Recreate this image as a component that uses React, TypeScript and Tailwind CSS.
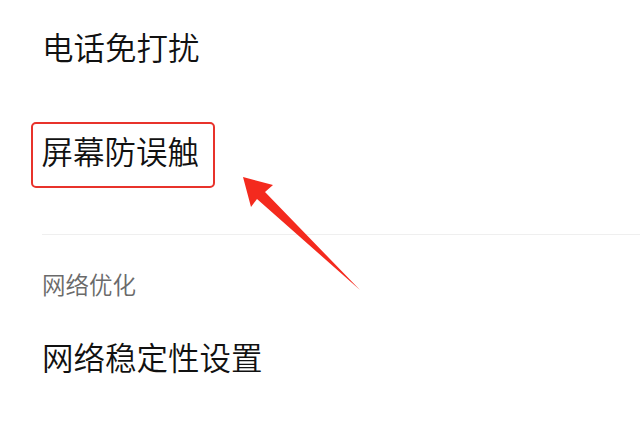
import React from "react";

export default function App() {
  const font = { fontFamily: '"Noto Sans CJK SC", "Noto Sans", sans-serif' };
  return (
    <div className="relative w-[640px] h-[427px] bg-white overflow-hidden" style={font}>
      <div className="flex flex-col pl-[42px]">
        <div className="pt-[26px] text-[31.5px] leading-[40px] font-[350] text-[#111111]">电话免打扰</div>
        <div className="mt-[56px] flex">
          <div className="ml-[-11px] w-[184px] h-[66px] border-[2.5px] border-[#e8322b] rounded-[5px] pl-[8.5px] pt-[6px] text-[31.5px] leading-[40px] font-[350] text-[#111111]">
            屏幕防误触
          </div>
        </div>
        <div className="mt-[45.5px] h-px bg-[#efefef]"></div>
        <div className="mt-[33px] text-[23.5px] leading-[32px] font-[350] text-[#6a6a6a]">网络优化</div>
        <div className="mt-[36px] text-[31.5px] leading-[40px] font-[350] text-[#111111]">网络稳定性设置</div>
      </div>
      <svg className="absolute left-0 top-0" width="640" height="427" viewBox="0 0 640 427">
        <path d="M243 177 L273 185 L265 192 L360 290 L257 199 L251 207 Z" fill="#f42a1e" />
      </svg>
    </div>
  );
}
